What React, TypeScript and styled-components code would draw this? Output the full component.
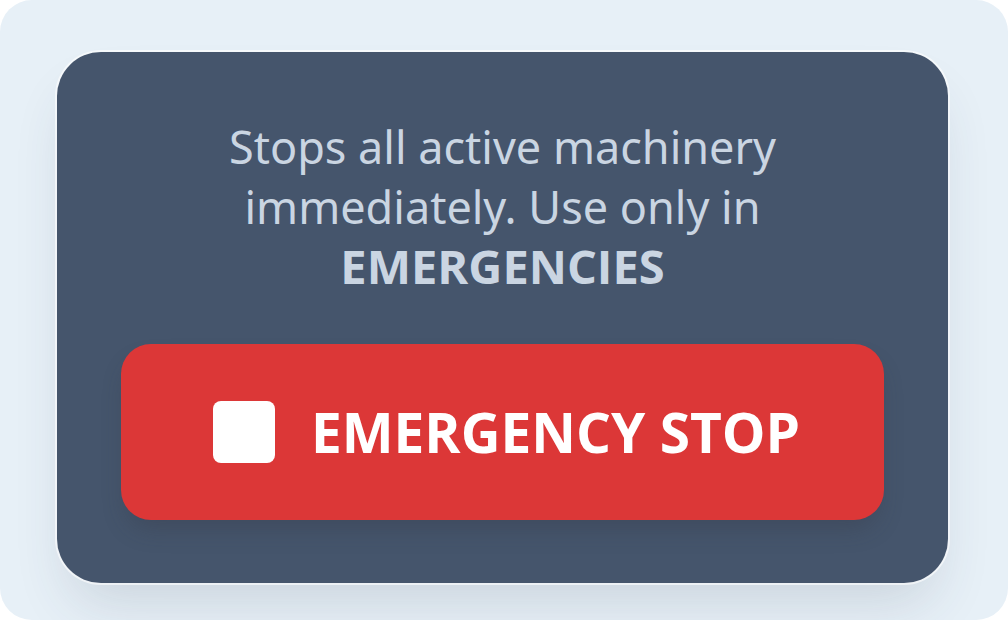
import React from "react";
import styled, { createGlobalStyle } from "styled-components";

const GlobalStyle = createGlobalStyle`
  * { box-sizing: border-box; }
  body { margin: 0; background: #ffffff; }
`;

const Page = styled.main`
  min-height: 100vh;
  padding: 52px 60px 37px 57px;
  border-radius: 32px;
  background: #e7f0f7;
  overflow: hidden;
  font-family: "Noto Sans", "Open Sans", sans-serif;
`;

const Card = styled.section`
  display: flex;
  flex-direction: column;
  gap: 47px;
  padding: 65px 64px 63px;
  border-radius: 44px;
  background: #45556c;
  box-shadow:
    0 0 0 2px rgba(255, 255, 255, 0.6),
    0 32px 56px -14px rgba(51, 65, 85, 0.16);
`;

const Notice = styled.p`
  margin: 0 auto;
  max-width: 600px;
  color: #cad5e2;
  font-size: 45px;
  line-height: 60px;
  text-align: center;

  strong {
    font-family: "Open Sans", "Noto Sans", sans-serif;
    font-size: 47px;
    line-height: 1;
  }
`;

const StopButton = styled.button`
  display: flex;
  align-items: center;
  justify-content: center;
  gap: 36px;
  width: 100%;
  height: 176px;
  padding: 0 24px 0 32px;
  border: 0;
  border-radius: 30px;
  background: #dc3737;
  color: #ffffff;
  font: 700 55px/72px "Open Sans", "Noto Sans", sans-serif;
  white-space: nowrap;
  cursor: pointer;
  box-shadow: 0 14px 24px -6px rgba(50, 50, 60, 0.3);
`;

const StopIcon = styled.span`
  flex: none;
  width: 62px;
  height: 62px;
  border-radius: 8px;
  background: #ffffff;
`;

export default function App() {
  return (
    <>
      <GlobalStyle />
      <Page>
        <Card>
          <Notice>
            Stops all active machinery immediately. Use only in <strong>EMERGENCIES</strong>
          </Notice>
          <StopButton type="button">
            <StopIcon aria-hidden="true" />
            EMERGENCY STOP
          </StopButton>
        </Card>
      </Page>
    </>
  );
}
